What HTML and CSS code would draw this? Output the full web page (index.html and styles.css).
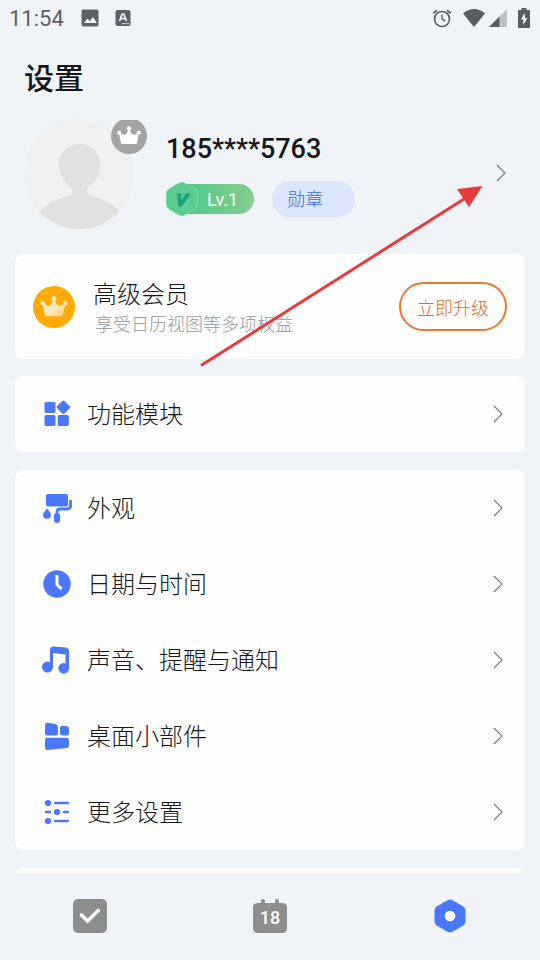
FILE: index.html
```html
<!DOCTYPE html>
<html lang="zh-CN">
<head>
<meta charset="utf-8">
<meta name="viewport" content="width=device-width, initial-scale=1">
<title>设置</title>
<link rel="stylesheet" href="styles.css">
</head>
<body>
<svg class="defs" width="0" height="0" aria-hidden="true">
  <symbol id="chevron" viewBox="0 0 10 18"><path d="M1 1l8 8-8 8" fill="none" stroke="currentColor" stroke-width="1.1"/></symbol>
  <symbol id="crown" viewBox="0 0 26 20"><path d="M4.600 18.200L2.900 9A2 2 0 1 1 4.500 7.700Q8 10.600 10.200 8.200Q11.700 6.400 11.700 4.400A2.200 2.200 0 1 1 14.300 4.400Q14.300 6.400 15.800 8.200Q18 10.600 21.500 7.700A2 2 0 1 1 23.100 9L21.400 18.200Q21.200 19 20.400 19H5.600Q4.800 19 4.600 18.200Z"/></symbol>
</svg>

<header class="status">
  <time class="clock">11:54</time>
  <svg width="18" height="18" viewBox="0 0 18 18"><rect x=".5" y=".5" width="17" height="17" rx="2" fill="#5f6065"/><path d="M3 14l3.500-4.500 2.300 2.700L12 8l4 6z" fill="#f2f5fb"/></svg>
  <svg class="lang" width="16" height="18" viewBox="0 0 16 18"><rect x=".5" y="1" width="15" height="16" rx="2" fill="#5f6065"/><path d="M4.500 12L7.200 5h1.600l2.700 7M5.700 9.600h4.600" fill="none" stroke="#f2f5fb" stroke-width="1.700"/><path d="M7 14.700h7" stroke="#f2f5fb" stroke-dasharray="2 .6"/></svg>
  <span class="spacer"></span>
  <svg width="20" height="20" viewBox="0 0 20 20" fill="none" stroke="#5f6065"><circle cx="10" cy="11" r="7.500" stroke-width="1.700"/><path d="M10 6.500V11l3.400 2.200" stroke-width="1.400"/><path d="M1.200 5.300L5 2.200M18.800 5.300L15 2.200" stroke-width="1.800"/></svg>
  <svg class="wifi" width="22" height="18" viewBox="0 0 22 18"><path d="M0 4.500Q5 0 11 0t11 4.500L11 18z" fill="#5b5c60"/></svg>
  <svg class="signal" width="18" height="18" viewBox="0 0 18 18"><path d="M18 0v18H0z" fill="#bfc1c6"/><path d="M10.500 7.500V18H0z" fill="#5b5c60"/></svg>
  <svg class="battery" width="12" height="20" viewBox="0 0 12 20"><path d="M3.500 0h5v2H11q1 0 1 1v16q0 1-1 1H1q-1 0-1-1V3q0-1 1-1h2.500z" fill="#5b5c60"/><path d="M6.800 5L3 11.500h2.400V17L9.300 10H6.800z" fill="#fff"/></svg>
</header>

<main class="content">
  <h1>设置</h1>

  <a class="profile" href="#profile" aria-label="个人资料">
    <span class="avatar">
      <svg width="110" height="110" viewBox="0 0 110 110"><circle cx="55" cy="55" r="55" fill="#f0f0f1"/><path d="M15.500 92.500Q26 81 46 76.500Q49 75.500 48 71.500Q47 69 44 66Q35 57 35 45.500A20.500 20.500 0 0 1 76 45.500Q76 57 67 66Q63 69.500 62.500 72Q62 75.500 66 76.500Q86 82 95.500 92.500Q79 110 55 110T15.500 92.500Z" fill="#e1e1e1"/></svg>
      <svg class="badge" width="36" height="35" viewBox="0 2 36 35"><circle cx="18" cy="18" r="18" fill="#a4a4a4"/><use href="#crown" x="5.500" y="8" width="25" height="19" fill="#fff"/></svg>
    </span>
    <span class="identity">
      <strong class="phone">185****5763</strong>
      <span class="tags">
        <span class="level">
          <svg width="32" height="34" viewBox="0 0 32 34"><path d="M13.500 1Q16 -.4 18.500 1L29 7q2.500 1.400 2.500 4v12q0 2.600-2.500 4L18.500 33q-2.500 1.400-5 0L3 27Q.5 25.600.5 23V11Q.5 8.400 3 7z" fill="#5ccb91" stroke="#7bd9a7"/><path d="M10 11.500h5l.4 7.500 4.300-7.500H25L15.800 24.500h-3.600L11.400 14z" fill="#19a572"/></svg>
          <span>Lv.1</span>
        </span>
        <span class="medal">勋章</span>
      </span>
    </span>
    <svg class="chevron" width="10" height="18"><use href="#chevron"/></svg>
  </a>

  <section class="card premium">
    <svg width="42" height="42" viewBox="0 0 42 42"><defs><linearGradient id="cream" x1="0" y1="0" x2="1" y2="1"><stop offset="0" stop-color="#fff4df"/><stop offset=".6" stop-color="#ffe6b5"/><stop offset="1" stop-color="#ffc95f"/></linearGradient></defs><circle cx="21" cy="21" r="21" fill="#ffaa05"/><svg x="7" y="9" width="28" height="23" viewBox="0 0 26 20"><path d="M4.600 18.200L2.900 9A2 2 0 1 1 4.500 7.700Q8 10.600 10.200 8.200Q11.700 6.400 11.700 4.400A2.200 2.200 0 1 1 14.300 4.400Q14.300 6.400 15.800 8.200Q18 10.600 21.500 7.700A2 2 0 1 1 23.100 9L21.400 18.200Q21.200 19 20.400 19H5.600Q4.800 19 4.600 18.200Z" fill="url(#cream)"/></svg></svg>
    <div class="offer">
      <h2>高级会员</h2>
      <p>享受日历视图等多项权益</p>
    </div>
    <button class="upgrade" type="button">立即升级</button>
  </section>

  <nav class="card" aria-label="功能">
    <a class="row" href="#modules">
      <svg width="28" height="28" viewBox="0 0 28 28" fill="#4b78fa"><rect x="1.500" y="2" width="11" height="11" rx="1.500"/><rect x="1.500" y="15" width="11" height="11" rx="1.500"/><rect x="14.800" y="15" width="11" height="11" rx="1.500"/><rect x="15.200" y="2" width="10.400" height="10.400" rx="1.500" transform="rotate(45 20.400 7.200)"/></svg>
      <span>功能模块</span>
      <svg class="chevron" width="10" height="18"><use href="#chevron"/></svg>
    </a>
  </nav>

  <nav class="card" aria-label="设置项">
    <a class="row" href="#appearance">
      <svg width="28" height="28" viewBox="0 0 28 28" fill="#4b78fa"><rect x="3" y="0" width="22" height="12.500" rx="2"/><path d="M27.500 6v5.500q0 3.500-3.500 3.500H17q-3 0-3 3V20" fill="none" stroke="#4b78fa" stroke-width="2.800"/><path d="M11 21q0-1.500 1.500-1.500h3q1.500 0 1.500 1.500v5a3 3 0 0 1-6 0z"/><path d="M4 14.500q4 4.500 4 6.300a4 4 0 0 1-8 0q0-1.800 4-6.300z"/></svg>
      <span>外观</span>
      <svg class="chevron" width="10" height="18"><use href="#chevron"/></svg>
    </a>
    <a class="row" href="#datetime">
      <svg width="28" height="28" viewBox="0 0 28 28"><circle cx="14" cy="14" r="13.700" fill="#4b78fa"/><path d="M14 6.500v8l3.500 3.500" fill="none" stroke="#fff" stroke-width="3" stroke-linecap="square" stroke-linejoin="round"/></svg>
      <span>日期与时间</span>
      <svg class="chevron" width="10" height="18"><use href="#chevron"/></svg>
    </a>
    <a class="row" href="#sound">
      <svg width="28" height="28" viewBox="0 0 28 28" fill="#4b78fa"><path d="M7 4Q7 .5 10.500 .5L23 1.500Q26 2 26 5V22H22.500V8.500L10 7V21H7z"/><circle cx="4.500" cy="21" r="5.500"/><circle cx="20.700" cy="22.300" r="5.400"/></svg>
      <span>声音、提醒与通知</span>
      <svg class="chevron" width="10" height="18"><use href="#chevron"/></svg>
    </a>
    <a class="row" href="#widgets">
      <svg width="28" height="28" viewBox="0 0 28 28" fill="#4b78fa"><path d="M2 3q0-2.500 2.500-2.300l8 1.300Q15 2.300 15 5v6.300q0 2.200-2.200 2.200H4.200Q2 13.500 2 11.300zM17 6q0-2.500 2.500-2.300l4.500.6q2 .2 2 2.400v4.600q0 2.200-2.200 2.200h-4.600Q17 13.500 17 11.300zM2 18q0-2.300 2.300-2.300h19.400Q26 15.700 26 18v5.500q0 2.100-2 2.400L4.500 28Q2 28.300 2 26z"/></svg>
      <span>桌面小部件</span>
      <svg class="chevron" width="10" height="18"><use href="#chevron"/></svg>
    </a>
    <a class="row" href="#more">
      <svg width="28" height="28" viewBox="0 0 28 28" fill="#4b78fa" stroke="#4b78fa" stroke-width="2.600" stroke-linecap="round"><g stroke="none"><circle cx="5" cy="5" r="3.100"/><circle cx="14" cy="14" r="3.100"/><circle cx="5" cy="23" r="3.100"/></g><path d="M12.200 5h12.600M12.200 23h12.600M3.200 14h3.600M21.200 14h3.600"/></svg>
      <span>更多设置</span>
      <svg class="chevron" width="10" height="18"><use href="#chevron"/></svg>
    </a>
  </nav>

  <div class="card next"></div>
</main>

<nav class="tabs" aria-label="主导航">
  <a href="#tasks" aria-label="任务"><svg width="34" height="34" viewBox="0 0 34 34"><rect width="34" height="34" rx="5" fill="#8e8e8e"/><path d="M8.500 16l6 6L25.300 11.500" fill="none" stroke="#f8f9fb" stroke-width="3.600" stroke-linecap="round"/></svg></a>
  <a href="#calendar" aria-label="日历"><svg width="34" height="34" viewBox="0 0 34 34"><path d="M5 4h3V2q0-2 2-2t2 2v2h10V2q0-2 2-2t2 2v2h3q5 0 5 5v20q0 5-5 5H5q-5 0-5-5V9q0-5 5-5z" fill="#8e8e8e"/><text class="day" x="17" y="25" text-anchor="middle">18</text></svg></a>
  <a href="#settings" aria-label="设置"><svg width="34" height="34" viewBox="0 0 34 34"><path d="M14.500 1.200q2.500-1.500 5 0l10.500 6q2.500 1.500 2.500 4.300v11q0 2.800-2.500 4.300l-10.500 6q-2.500 1.500-5 0l-10.500-6Q1.500 25.300 1.500 22.500v-11Q1.500 8.700 4 7.200z" fill="#4b78fa"/><circle cx="17" cy="17" r="5.300" fill="#fff"/></svg></a>
</nav>

<svg class="pointer" width="284" height="182" viewBox="0 0 284 182" aria-hidden="true"><path d="M1 180.500L264 14" stroke="#e63b3c" stroke-width="3"/><path d="M282.500 1L257 4l12 18z" fill="#e63b3c"/></svg>
</body>
</html>
```

FILE: styles.css
```css
* { box-sizing: border-box; }

body {
  position: relative;
  display: flex;
  flex-direction: column;
  height: 100vh;
  margin: 0;
  overflow: hidden;
  background: #f0f4f9;
  color: #16171a;
  font-family: Roboto, "Noto Sans CJK SC", sans-serif;
}

a { color: inherit; text-decoration: none; }
svg { display: block; flex: none; }
.defs { position: absolute; }

.status {
  display: flex;
  flex: none;
  align-items: center;
  height: 36px;
  padding: 0 10px 0 9px;
}
.clock {
  margin-right: 17px;
  color: #5f6065;
  font-size: 22px;
}
.lang { margin-left: 16px; }
.spacer { flex: 1; }
.wifi { margin-left: 11px; }
.signal { margin-left: 4px; }
.battery { margin-left: 11px; }

.content {
  flex: 1;
  min-height: 0;
  padding: 0 15px;
  overflow: hidden;
}

h1 {
  margin: 0 9px;
  padding: 21px 0 19px;
  font-size: 30px;
  font-weight: 500;
  line-height: 43px;
}

.profile {
  display: flex;
  align-items: center;
  height: 110px;
  margin-bottom: 25px;
  padding: 0 19px 0 9px;
}
.avatar { position: relative; flex: none; }
.badge { position: absolute; top: 1px; right: -13px; }
.identity {
  display: flex;
  flex: 1;
  flex-direction: column;
  gap: 14px;
  margin-left: 32px;
}
.phone {
  font-size: 27px;
  font-weight: 500;
  line-height: 36px;
}
.tags { display: flex; align-items: center; gap: 18px; }
.level {
  display: flex;
  align-items: center;
  gap: 9px;
  height: 30px;
  padding-right: 16px;
  border-radius: 15px;
  background: linear-gradient(90deg, #3fc98b, #87cc8d);
  color: #fff;
  font-size: 18px;
}
.medal {
  height: 36px;
  padding: 0 32px 0 15px;
  border-radius: 18px;
  background: #dce5fb;
  color: #3d6be0;
  font-size: 18px;
  font-weight: 300;
  line-height: 38px;
}
.chevron { color: #77787c; }
.profile .chevron { margin-top: -2px; }

.card {
  margin-bottom: 18px;
  border-radius: 9px;
  background: #fefefe;
}
.premium {
  display: flex;
  align-items: center;
  height: 105px;
  margin-bottom: 17px;
  padding: 0 18px;
}
.offer { flex: 1; margin-left: 18px; padding-top: 4px; }
.offer h2 {
  margin: 0;
  font-size: 24px;
  font-weight: 300;
  line-height: 32px;
}
.offer p {
  margin: 0 2px;
  color: #97989b;
  font-size: 18px;
  font-weight: 300;
  line-height: 28px;
}
.upgrade {
  height: 49px;
  padding: 0 16px;
  border: 2px solid #e77a35;
  border-radius: 25px;
  background: none;
  color: #dc6b2d;
  font: 300 18px "Noto Sans CJK SC", sans-serif;
}

.row {
  display: flex;
  align-items: center;
  gap: 16px;
  height: 76px;
  padding: 0 22px 0 28px;
  font-size: 24px;
  font-weight: 300;
}
.row svg { overflow: visible; }
.row span { flex: 1; padding-bottom: 3px; }
.next { height: 76px; }

.tabs {
  display: grid;
  flex: none;
  grid-template-columns: repeat(3, 1fr);
  align-items: center;
  justify-items: center;
  height: 87px;
  padding-bottom: 1px;
}
.day {
  fill: #fff;
  font-size: 18px;
  font-weight: 500;
}

.pointer { position: absolute; top: 185px; left: 200px; pointer-events: none; }
```
